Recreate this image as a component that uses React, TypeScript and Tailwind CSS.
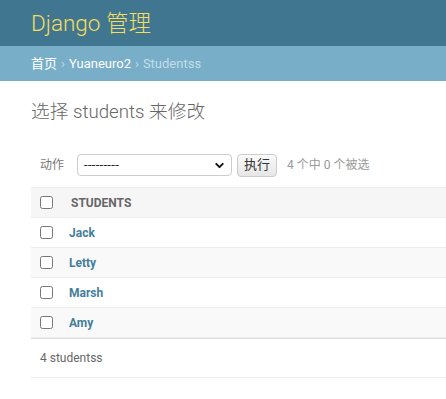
import React from 'react'
import { ChevronDown } from 'lucide-react'

const FONT = "font-['Roboto','Noto_Sans_CJK_SC',sans-serif]"

const STUDENTS = ['Jack', 'Letty', 'Marsh', 'Amy']

export default function App() {
  return (
    <div className={`${FONT} w-[446px] h-[399px] overflow-hidden bg-white text-[12px] text-[#333]`}>
      {/* Header */}
      <div className="h-[46px] bg-[#417690] pl-[31px] flex items-center">
        <h1 className="text-[22.5px] font-light text-[#f5dd5d] leading-none">Django 管理</h1>
      </div>

      {/* Breadcrumbs */}
      <div className="h-[35px] bg-[#79aec8] pl-[31px] flex items-center text-[13px] text-white">
        <span>首页</span>
        <span className="mx-[4px] text-[#c4dce8]">›</span>
        <span>Yuaneuro2</span>
        <span className="mx-[4px] text-[#c4dce8]">›</span>
        <span className="text-[#c4dce8]">Studentss</span>
      </div>

      {/* Content */}
      <div className="pl-[31px] pt-[17px]">
        <h1 className="text-[18.7px] font-light text-[#666] leading-[28px]">选择 students 来修改</h1>

        <div className="mt-[27px] flex items-center h-[24px] pl-[9px] text-[12px]">
          <label className="text-[#777] mr-[13px]">动作</label>
          <div className="relative w-[155px] h-[22px] border border-[#ccc] rounded-[4px] bg-white flex items-center pl-[6px]">
            <span className="text-[#222] text-[13px] tracking-[0.3px]">---------</span>
            <ChevronDown className="absolute right-[5px] top-[4px] w-[13px] h-[13px] text-[#111]" strokeWidth={3.5} />
          </div>
          <button className="ml-[5px] h-[23px] w-[40px] border border-[#ccc] rounded-[4px] bg-gradient-to-b from-[#fafafa] to-[#e6e6e6] text-[#333] text-[13px]">
            执行
          </button>
          <span className="ml-[10px] text-[#999]">4 个中 0 个被选</span>
        </div>

        <div className="mt-[10px]">
          {/* Header row */}
          <div className="h-[31px] bg-[#f6f6f6] border-t border-[#eee] border-b flex items-center">
            <div className="w-[38px] flex pl-[9px]">
              <input type="checkbox" className="w-[13px] h-[13px] m-0" />
            </div>
            <span className="ml-[2px] text-[12px] font-bold uppercase text-[#666]">Students</span>
          </div>
          {STUDENTS.map((name, i) => (
            <div
              key={name}
              className={`h-[30px] flex items-center border-b border-[#eee] ${i % 2 === 1 ? 'bg-[#f9f9f9]' : 'bg-white'}`}
            >
              <div className="w-[38px] flex pl-[9px]">
                <input type="checkbox" className="w-[13px] h-[13px] m-0" />
              </div>
              <a className="text-[#447e9b] font-bold text-[12px]">{name}</a>
            </div>
          ))}
          {/* Paginator */}
          <div className="h-[40px] border-t border-[#ddd] border-b border-b-[#eee] flex items-center pl-[9px] text-[#666] text-[12px]">
            4 studentss
          </div>
        </div>
      </div>
    </div>
  )
}
